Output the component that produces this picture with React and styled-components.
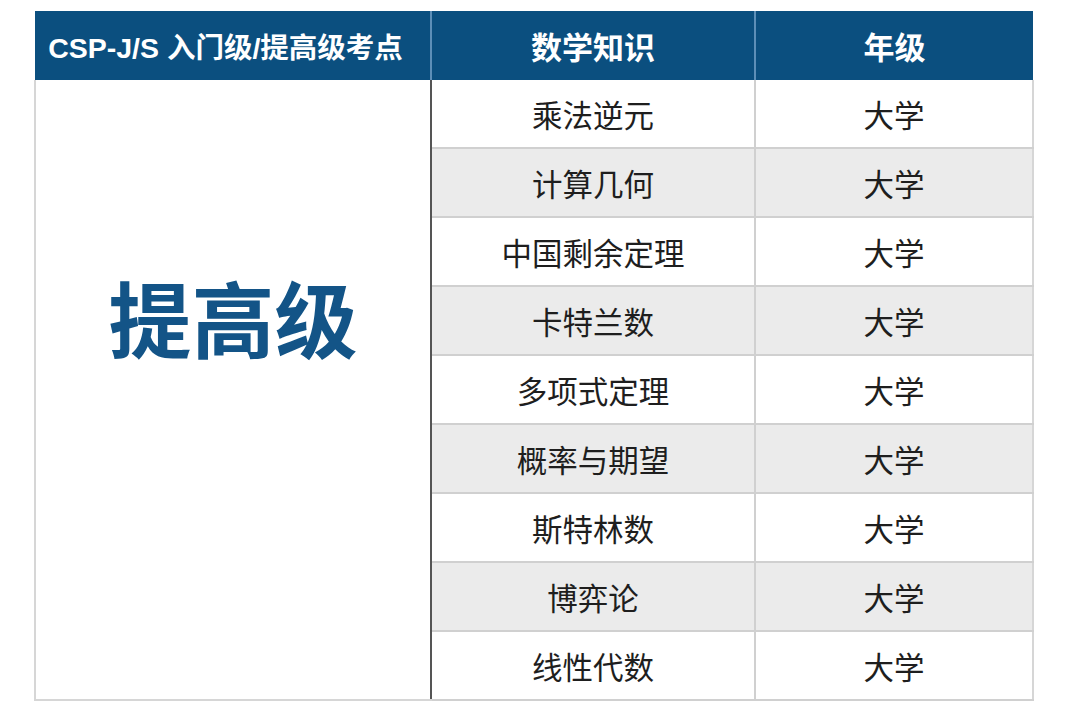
import React from 'react';
import styled, { createGlobalStyle } from 'styled-components';

const topics = [
  '乘法逆元',
  '计算几何',
  '中国剩余定理',
  '卡特兰数',
  '多项式定理',
  '概率与期望',
  '斯特林数',
  '博弈论',
  '线性代数',
];

function App() {
  return (
    <>
      <GlobalStyle />
      <Page>
        <Table>
          <colgroup>
            <col style={{ width: 396 }} />
            <col style={{ width: 324 }} />
            <col style={{ width: 278 }} />
          </colgroup>
          <thead>
            <tr>
              <HeadCell $first>CSP-J/S 入门级/提高级考点</HeadCell>
              <HeadCell>数学知识</HeadCell>
              <HeadCell $last>年级</HeadCell>
            </tr>
          </thead>
          <tbody>
            {topics.map((topic, i) => (
              <Row key={topic} $shaded={i % 2 === 1}>
                {i === 0 && <LevelCell rowSpan={topics.length}>提高级</LevelCell>}
                <Cell>{topic}</Cell>
                <Cell $last>大学</Cell>
              </Row>
            ))}
          </tbody>
        </Table>
      </Page>
    </>
  );
}

export default App;

const GlobalStyle = createGlobalStyle`
  html, body {
    margin: 0;
    background: #ffffff;
  }
  body {
    font-family: "Liberation Sans", "Noto Sans CJK SC", sans-serif;
  }
`

const Page = styled.div`
  width: 1080px;
  height: 715px;
  padding: 11px 0 0 34px;
  box-sizing: border-box;
  overflow: hidden;
`

const Table = styled.table`
  width: 998px;
  border-collapse: collapse;
  table-layout: fixed;
`

const HeadCell = styled.th`
  height: 69px;
  padding: 0;
  padding-right: ${p => (p.$first ? '14px' : '0')};
  box-sizing: border-box;
  background-color: #0b4f7f;
  color: #ffffff;
  font-size: ${p => (p.$first ? '28.5px' : '31px')};
  font-weight: 700;
  text-align: center;
  vertical-align: middle;
  white-space: nowrap;
  border-left: ${p => (p.$first ? 'none' : '2px solid #5d8fb8')};
`

const Row = styled.tr`
  background-color: ${p => (p.$shaded ? '#ebebeb' : '#ffffff')};
`

const LevelCell = styled.td`
  padding: 194px 0 0;
  background-color: #ffffff;
  color: #135487;
  font-size: 83px;
  font-weight: 700;
  line-height: 100px;
  text-align: center;
  vertical-align: top;
  border-left: 2px solid #d6d6d6;
  border-bottom: 2px solid #d6d6d6;
  border-right: 2px solid #555555;
`

const Cell = styled.td`
  height: 67px;
  padding: 0;
  color: #1e1e1e;
  font-size: 30.5px;
  text-align: center;
  vertical-align: middle;
  border-bottom: 2px solid #d0d0d0;
  border-right: ${p => (p.$last ? '2px solid #d6d6d6' : '2px solid #d0d0d0')};
`
